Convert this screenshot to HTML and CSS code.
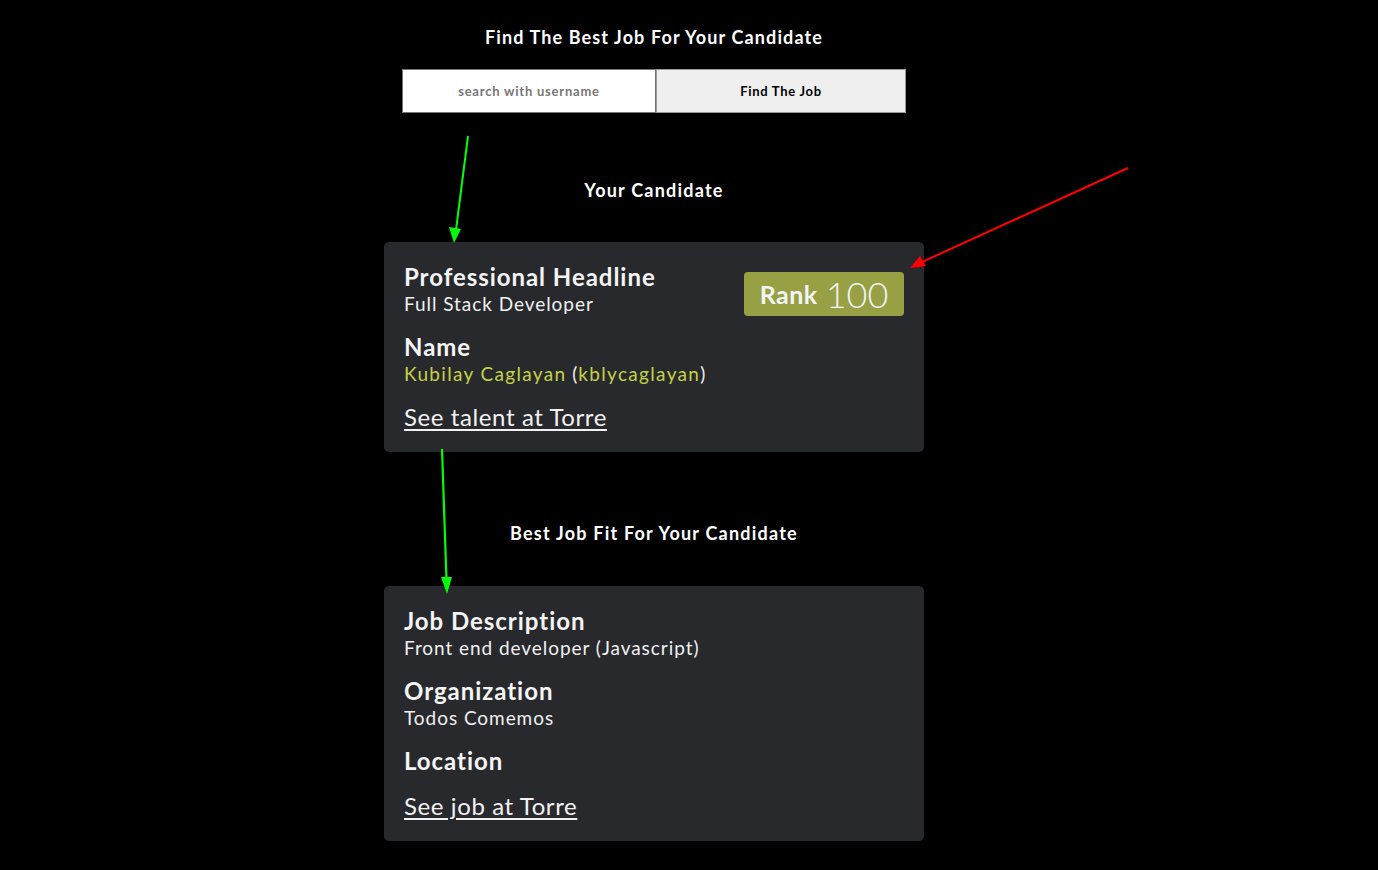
FILE: index.html
```html
<!DOCTYPE html>
<html lang="en">
<head>
<meta charset="utf-8">
<title>Find The Best Job</title>
<link rel="stylesheet" href="styles.css">
</head>
<body>
<main class="page">
  <h1 class="title">Find The Best Job For Your Candidate</h1>
  <form class="search">
    <input class="search-input" type="text" placeholder="search with username">
    <button class="search-btn" type="button">Find The Job</button>
  </form>

  <h2 class="section-title sec-candidate">Your Candidate</h2>
  <section class="card">
    <div class="card-top">
      <div class="field">
        <div class="label">Professional Headline</div>
        <div class="value">Full Stack Developer</div>
      </div>
      <div class="rank"><span class="rank-word">Rank</span><span class="rank-num">100</span></div>
    </div>
    <div class="field">
      <div class="label">Name</div>
      <div class="value"><span class="hl">Kubilay Caglayan</span> (<span class="hl">kblycaglayan</span>)</div>
    </div>
    <a class="link" href="#">See talent at Torre</a>
  </section>

  <h2 class="section-title sec-job">Best Job Fit For Your Candidate</h2>
  <section class="card">
    <div class="field">
      <div class="label">Job Description</div>
      <div class="value">Front end developer (Javascript)</div>
    </div>
    <div class="field">
      <div class="label">Organization</div>
      <div class="value">Todos Comemos</div>
    </div>
    <div class="field field-empty">
      <div class="label">Location</div>
      <div class="value"></div>
    </div>
    <a class="link" href="#">See job at Torre</a>
  </section>
</main>

<svg class="annotations" width="1378" height="870" viewBox="0 0 1378 870" aria-hidden="true">
  <line x1="468" y1="136" x2="456" y2="230" stroke="#00ff00" stroke-width="2"/>
  <polygon points="449,227 461,229 454,243" fill="#00ff00"/>
  <line x1="1128" y1="168" x2="922" y2="262" stroke="#ff0000" stroke-width="2"/>
  <polygon points="920,256 926,266 910,268" fill="#ff0000"/>
  <line x1="442" y1="449" x2="446.5" y2="580" stroke="#00ff00" stroke-width="2.2"/>
  <polygon points="441,577 452,577 447,594" fill="#00ff00"/>
</svg>
</body>
</html>
```

FILE: styles.css
```css
* { box-sizing: border-box; }

html, body {
  margin: 0;
  padding: 0;
  background: #000;
}

body {
  font-family: "Lato", "Noto Sans", sans-serif;
  color: #f2f2f2;
  min-height: 870px;
  position: relative;
}

.page {
  width: 1308px;
  display: flex;
  flex-direction: column;
  align-items: center;
  padding-top: 24px;
}

.title {
  margin: 0;
  font-size: 18px;
  line-height: 26px;
  font-weight: 700;
  letter-spacing: 0.062em;
  color: #fff;
}

.search {
  display: flex;
  margin-top: 19px;
  width: 504px;
  height: 44px;
}

.search-input {
  width: 254px;
  height: 44px;
  border: 1px solid #767676;
  background: #fff;
  font-family: inherit;
  font-size: 13px;
  font-weight: 700;
  letter-spacing: 0.06em;
  text-align: center;
  color: #333;
  padding: 0;
  outline: none;
}

.search-input::placeholder {
  color: #777;
}

.search-btn {
  width: 250px;
  height: 44px;
  border: 1px solid #9a9a9a;
  background: #efefef;
  font-family: inherit;
  font-size: 13px;
  font-weight: 700;
  letter-spacing: 0.055em;
  color: #000;
  padding: 0;
}

.section-title {
  margin: 0;
  font-size: 18px;
  line-height: 26px;
  font-weight: 700;
  letter-spacing: 0.068em;
  color: #fff;
}

.sec-candidate { margin-top: 64px; }
.sec-job { margin-top: 68px; }

.card {
  width: 540px;
  background: #28292d;
  border-radius: 5px;
  padding: 20px 20px 21px;
  display: flex;
  flex-direction: column;
}

.sec-candidate + .card { margin-top: 39px; }
.sec-job + .card { margin-top: 40px; }

.card-top {
  display: flex;
  justify-content: space-between;
  align-items: flex-start;
}

.field { margin-bottom: 15px; }
.field-empty { margin-bottom: 16px; }

.label {
  font-size: 24px;
  line-height: 29px;
  font-weight: 700;
  letter-spacing: 0.04em;
  color: #f4f4f4;
}

.value {
  font-size: 19px;
  line-height: 26px;
  font-weight: 400;
  letter-spacing: 0.05em;
  color: #f0f0f0;
}

.hl {
  color: #c4d246;
  letter-spacing: 0.07em;
}

.link {
  font-size: 24px;
  line-height: 29px;
  letter-spacing: 0.025em;
  color: #f2f2f2;
  text-decoration: underline;
  text-underline-offset: 3px;
  text-decoration-thickness: 2px;
  align-self: flex-start;
}

.rank {
  margin-top: 10px;
  width: 160px;
  height: 44px;
  background: #97a144;
  border-radius: 4px;
  display: flex;
  align-items: center;
  justify-content: center;
  gap: 8px;
  color: #f2f4f6;
}

.rank-word {
  font-size: 25px;
  font-weight: 700;
  letter-spacing: 0.02em;
}

.rank-num {
  font-size: 36px;
  font-weight: 300;
  line-height: 1;
}

.annotations {
  position: absolute;
  left: 0;
  top: 0;
  pointer-events: none;
}
```
